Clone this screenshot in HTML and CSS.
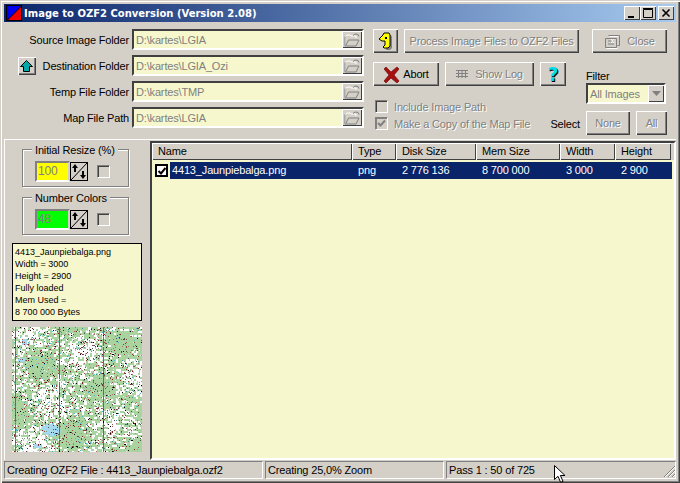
FILE: index.html
```html
<!DOCTYPE html>
<html lang="en">
<head>
    <meta charset="UTF-8">
    <title>Image to OZF2 Conversion</title>
    <link rel="stylesheet" href="styles.css">
</head>
<body>
    <svg class="defs" width="0" height="0">
        <symbol id="folder" viewBox="0 0 16 14">
            <path d="M1.5 12.5V3.5L3 2h3l1 1h5v2" fill="none" stroke="#fff" stroke-width="1"/>
            <path d="M1 3.5V13h11l3-6H4.5L2 12" fill="none" stroke="#808080" stroke-width="1"/>
            <path d="M9 2.5l2-1.5 3 .5 1 2" fill="none" stroke="#808080" stroke-width="1"/>
        </symbol>
    </svg>

    <div class="window">
        <div class="titlebar">
            <svg class="app-icon" width="16" height="16" viewBox="0 0 16 16">
                <rect width="16" height="16" fill="#000"/>
                <path d="M1 1h14L1 15z" fill="#0000f0"/>
                <path d="M15 2v13H2z" fill="#f00000"/>
            </svg>
            <span class="title">Image to OZF2 Conversion (Version 2.08)</span>
            <div class="win-buttons">
                <div class="win-btn"><svg width="16" height="14"><rect x="4" y="10" width="6" height="2" fill="#000"/></svg></div>
                <div class="win-btn"><svg width="16" height="14"><path d="M3.5 3.5h9v8h-9zM3 2.5h10" fill="none" stroke="#000"/></svg></div>
                <div class="win-btn win-close"><svg width="16" height="14"><path d="M4.5 3.5l7 7M11.5 3.5l-7 7" stroke="#000" stroke-width="1.6"/></svg></div>
            </div>
        </div>

        <div class="top">
            <div class="paths">
                <div class="path-row">
                    <label>Source Image Folder</label>
                    <div class="field">D:\kartes\LGIA<div class="browse"><svg width="16" height="14"><use href="#folder"/></svg></div></div>
                </div>
                <div class="path-row">
                    <div class="btn up-btn">
                        <svg width="13" height="12" viewBox="0 0 13 12"><path d="M6.5 .5l6 6H9.5v5h-6v-5H.5z" fill="#00a8a8" stroke="#000"/></svg>
                    </div>
                    <label>Destination Folder</label>
                    <div class="field">D:\kartes\LGIA_Ozi<div class="browse"><svg width="16" height="14"><use href="#folder"/></svg></div></div>
                </div>
                <div class="path-row">
                    <label>Temp File Folder</label>
                    <div class="field">D:\kartes\TMP<div class="browse"><svg width="16" height="14"><use href="#folder"/></svg></div></div>
                </div>
                <div class="path-row">
                    <label>Map File Path</label>
                    <div class="field">D:\kartes\LGIA<div class="browse"><svg width="16" height="14"><use href="#folder"/></svg></div></div>
                </div>
            </div>

            <div class="actions">
                <div class="btn-row">
                    <div class="btn key-btn">
                        <svg width="15" height="19" viewBox="0 0 15 19">
                            <path d="M10 3h3l1 2v11l-2 2H8z" fill="#808080"/>
                            <path d="M6 1h5l1 2v11l-2 2H6l-1-1 2-2V9H4L1 7l4-4z" fill="#ffff00" stroke="#000"/>
                            <path d="M7 5h2v2H7z" fill="#000"/>
                        </svg>
                    </div>
                    <div class="btn process-btn disabled">Process Image Files to OZF2 Files</div>
                </div>
                <div class="btn-row">
                    <div class="btn abort-btn">
                        <svg width="17" height="17" viewBox="0 0 17 17">
                            <path d="M1 3l2-2 5 5 6-5 2 2-5 6 5 6-2 2-6-5-5 5-2-2 5-6z" fill="#a81010" stroke="#701010" stroke-width=".7"/>
                        </svg>
                        Abort
                    </div>
                    <div class="btn log-btn disabled">
                        <svg width="12" height="8" viewBox="0 0 12 8"><path d="M0 .5h12M0 3.5h12M0 6.5h12M2.5 0v8M6 0v8M9.5 0v8" stroke="#808080"/></svg>
                        Show Log
                    </div>
                    <div class="btn help-btn">?</div>
                </div>
                <div class="check-line disabled-text">
                    <span class="check"></span>Include Image Path
                </div>
                <div class="check-line disabled-text">
                    <span class="check checked"><svg width="11" height="11"><path d="M2 5l2.5 2.5L9 2.5" fill="none" stroke="#808080" stroke-width="2"/></svg></span>Make a Copy of the Map File
                    <span class="select-label">Select</span>
                </div>
            </div>

            <div class="actions-right">
                <div class="btn close-btn disabled">
                    <svg width="17" height="15" viewBox="0 0 17 15">
                        <path d="M4.5 1.5h11v10h-2M1.5 4.5h11v9h-11zM4 7h6M4 10h6" fill="none" stroke="#808080"/>
                        <path d="M5.5 2.5h9M2.5 14.5h11M7 5l3 4M10 5L7 9" fill="none" stroke="#fff"/>
                    </svg>
                    Close
                </div>
                <div class="filter-label">Filter</div>
                <div class="combo">
                    <span>All Images</span>
                    <div class="combo-arrow"><svg width="9" height="5"><path d="M0 0h9L4.5 5z" fill="#808080"/></svg></div>
                </div>
                <div class="btn-row select-row">
                    <div class="btn none-btn disabled">None</div>
                    <div class="btn all-btn disabled">All</div>
                </div>
            </div>
        </div>

        <div class="main">
            <div class="side">
                <div class="group">
                    <span class="legend">Initial Resize (%)</span>
                    <div class="spin-field">
                        <div class="spin-value yellow">100</div>
                        <div class="spin"><svg width="16" height="17" viewBox="0 0 16 17"><path d="M16 0L0 17" stroke="#000"/><path d="M4 1L1 5h2v4h2V5h2zM12 16l3-4h-2V8h-2v4H9z" fill="#000"/></svg></div>
                        <span class="check"></span>
                    </div>
                </div>
                <div class="group">
                    <span class="legend">Number Colors</span>
                    <div class="spin-field">
                        <div class="spin-value green">48</div>
                        <div class="spin"><svg width="16" height="17" viewBox="0 0 16 17"><path d="M16 0L0 17" stroke="#000"/><path d="M4 1L1 5h2v4h2V5h2zM12 16l3-4h-2V8h-2v4H9z" fill="#000"/></svg></div>
                        <span class="check"></span>
                    </div>
                </div>
                <div class="info">
                    4413_Jaunpiebalga.png<br>
                    Width = 3000<br>
                    Height = 2900<br>
                    Fully loaded<br>
                    Mem Used =<br>
                    8 700 000 Bytes
                </div>
                <canvas class="preview" id="preview" width="130" height="125"></canvas>
            </div>

            <div class="list">
                <div class="list-head">
                    <div class="col col-name">Name</div>
                    <div class="col col-type">Type</div>
                    <div class="col col-disk">Disk Size</div>
                    <div class="col col-mem">Mem Size</div>
                    <div class="col col-width">Width</div>
                    <div class="col col-height">Height</div>
                </div>
                <div class="list-row">
                    <div class="cell col-name">
                        <span class="row-check"><svg width="10" height="10"><path d="M1.5 5l2.5 2.5L8.5 2" fill="none" stroke="#000" stroke-width="2"/></svg></span>
                        <span class="row-name">4413_Jaunpiebalga.png</span>
                    </div>
                    <div class="cell col-type">png</div>
                    <div class="cell col-disk">2 776 136</div>
                    <div class="cell col-mem">8 700 000</div>
                    <div class="cell col-width">3 000</div>
                    <div class="cell col-height">2 900</div>
                </div>
            </div>
        </div>

        <div class="status">
            <div class="pane pane-1">Creating OZF2 File : 4413_Jaunpiebalga.ozf2</div>
            <div class="pane pane-2">Creating 25,0% Zoom</div>
            <div class="pane pane-3">Pass 1 : 50 of 725</div>
            <svg class="grip" width="13" height="13"><path d="M12 1L1 12M12 5L5 12M12 9L9 12" stroke="#808080"/><path d="M12 2L2 12M12 6L6 12M12 10L10 12" stroke="#fff"/></svg>
        </div>

        <svg class="cursor" width="13" height="18" viewBox="0 0 13 18"><path d="M.5 .5v14l3.5-3.2 2.6 6 2.4-1-2.6-5.8H11z" fill="#fff" stroke="#000"/></svg>
    </div>

    <script src="script.js"></script>
</body>
</html>
```

FILE: styles.css
```css
* {
    box-sizing: border-box;
}

body {
    margin: 0;
    font-family: "Liberation Sans", Arial, sans-serif;
    font-size: 11px;
    letter-spacing: -0.16px;
    color: #000;
    background: #d4d0c8;
    overflow: hidden;
}

.defs {
    position: absolute;
}

.window {
    position: relative;
    width: 680px;
    height: 483px;
    padding: 4px;
    background: #d4d0c8;
    display: flex;
    flex-direction: column;
    box-shadow: inset 1px 1px 0 #d4d0c8, inset 2px 2px 0 #fff, inset -1px -1px 0 #404040, inset -2px -2px 0 #808080;
}

/* title bar */
.titlebar {
    height: 18px;
    flex: none;
    display: flex;
    align-items: center;
    padding: 0 2px;
    background: linear-gradient(to right, #0a246a, #a6caf0);
}

.app-icon {
    flex: none;
}

.title {
    margin-left: 2px;
    color: #fff;
    font-family: "DejaVu Sans", Verdana, sans-serif;
    font-size: 10px;
    font-weight: bold;
    letter-spacing: 0;
    white-space: nowrap;
}

.win-buttons {
    margin-left: auto;
    display: flex;
}

.win-btn {
    width: 16px;
    height: 14px;
    background: #d4d0c8;
    box-shadow: inset 1px 1px 0 #fff, inset -1px -1px 0 #404040;
}

.win-close {
    margin-left: 2px;
}

.win-btn svg {
    display: block;
}

/* top panel */
.top {
    height: 118px;
    flex: none;
    display: flex;
    border-bottom: 1px solid #fff;
}

.paths {
    width: 360px;
    padding-top: 7px;
    display: flex;
    flex-direction: column;
    gap: 5px;
}

.path-row {
    height: 21px;
    display: flex;
    align-items: center;
    justify-content: flex-end;
}

.path-row label {
    margin-right: 3px;
    white-space: nowrap;
}

.up-btn {
    width: 18px;
    height: 18px;
    margin-right: 7px;
}

.field {
    position: relative;
    width: 232px;
    height: 21px;
    padding: 2px 0 0 2px;
    color: #808080;
    background: #f7f7cd;
    border: 2px solid;
    border-color: #404040 #fff #fff #404040;
    line-height: 14px;
    white-space: nowrap;
}

.browse {
    position: absolute;
    top: 0;
    right: 0;
    width: 20px;
    height: 17px;
    background: #d4d0c8;
    display: flex;
    align-items: center;
    justify-content: center;
    box-shadow: inset 1px 1px 0 #fff, inset -1px -1px 0 #404040;
}

.btn {
    display: flex;
    align-items: center;
    justify-content: center;
    flex: none;
    background: #d4d0c8;
    box-shadow: inset 1px 1px 0 #fff, inset -1px -1px 0 #404040, inset -2px -2px 0 #808080;
    white-space: nowrap;
}

.disabled,
.disabled-text {
    color: #808080;
    text-shadow: 1px 1px 0 #fff;
}

.actions {
    width: 213px;
    margin-left: 9px;
    padding-top: 7px;
    flex: none;
}

.btn-row {
    display: flex;
    gap: 6px;
    margin-bottom: 9px;
}

.btn-row .btn {
    height: 24px;
}

.key-btn {
    width: 25px;
}

.process-btn {
    width: 175px;
}

.abort-btn {
    width: 66px;
    gap: 3px;
}

.log-btn {
    width: 89px;
    gap: 7px;
}

.help-btn {
    width: 26px;
    color: #00dce8;
    font-family: "DejaVu Sans", sans-serif;
    font-size: 19px;
    font-weight: bold;
    text-shadow: 1px 1px 0 #000;
}

.check-line {
    height: 17px;
    margin-left: 2px;
    display: flex;
    align-items: center;
    white-space: nowrap;
}

.btn-row + .check-line {
    margin-top: 12px;
}

.check {
    width: 13px;
    height: 13px;
    flex: none;
    margin-right: 6px;
    border: 1px solid;
    border-color: #808080 #fff #fff #808080;
    box-shadow: inset 1px 1px 0 #404040;
}

.check svg {
    display: block;
}

.checked {
    box-shadow: inset 1px 1px 0 #808080;
}

.select-label {
    margin-left: auto;
    margin-right: 6px;
    color: #000;
    text-shadow: none;
}

.actions-right {
    width: 81px;
    padding-top: 7px;
    flex: none;
}

.close-btn {
    width: 75px;
    height: 24px;
    margin-left: 6px;
    gap: 6px;
}

.filter-label {
    margin-top: 16px;
    line-height: 14px;
}

.combo {
    width: 80px;
    height: 21px;
    padding-left: 2px;
    display: flex;
    align-items: center;
    justify-content: space-between;
    color: #808080;
    background: #f7f7cd;
    border: 2px solid;
    border-color: #404040 #fff #fff #404040;
}

.combo-arrow {
    width: 16px;
    height: 17px;
    background: #d4d0c8;
    display: flex;
    align-items: center;
    justify-content: center;
    box-shadow: inset 1px 1px 0 #fff, inset -1px -1px 0 #404040;
}

.select-row {
    margin-top: 7px;
}

.none-btn {
    width: 44px;
}

.all-btn {
    width: 31px;
}

/* lower part */
.main {
    flex: 1;
    display: flex;
    min-height: 0;
}

.side {
    width: 146px;
    flex: none;
    padding: 9px 0 0 7px;
    border-left: 1px solid #fff;
}

.group {
    position: relative;
    width: 107px;
    height: 38px;
    margin: 0 0 10px 10px;
    border: 1px solid #808080;
    box-shadow: 1px 1px 0 #fff, inset 1px 1px 0 #fff;
}

.legend {
    position: absolute;
    top: -7px;
    left: 9px;
    padding: 0 3px;
    background: #d4d0c8;
    line-height: 14px;
    white-space: nowrap;
}

.spin-field {
    position: absolute;
    top: 11px;
    left: 12px;
    display: flex;
    align-items: center;
}

.spin-value {
    width: 35px;
    height: 21px;
    padding-left: 1px;
    color: #808080;
    border: 2px solid;
    border-color: #808080 #d4d0c8 #fff #808080;
    line-height: 17px;
    font-size: 12px;
}

.yellow {
    background: #ffff00;
}

.green {
    background: #00ff00;
}

.spin {
    width: 18px;
    height: 19px;
    margin-right: 9px;
    background: #d4d0c8;
    border: 1px solid #000;
}

.spin svg {
    display: block;
}

.info {
    width: 130px;
    height: 78px;
    margin-top: -2px;
    padding: 2px;
    background: #f7f7cd;
    border: 1px solid #000;
    font-size: 9px;
    letter-spacing: 0;
    line-height: 12px;
    white-space: nowrap;
}

.preview {
    display: block;
    width: 130px;
    height: 125px;
    margin-top: 6px;
}

.list {
    flex: 1;
    min-width: 0;
    margin-top: 1px;
    background: #f7f7cd;
    border: 2px solid;
    border-color: #404040 #fff #fff #404040;
}

.list-head {
    height: 17px;
    display: flex;
    background: #d4d0c8;
}

.col {
    height: 17px;
    padding-left: 6px;
    line-height: 16px;
    white-space: nowrap;
    box-shadow: inset 1px 1px 0 #fff, inset -1px -1px 0 #404040;
}

.list-row {
    height: 17px;
    margin: 2px 2px 0 0;
    display: flex;
    color: #fff;
    background: #0a246a;
}

.cell {
    padding-left: 6px;
    line-height: 17px;
    white-space: nowrap;
}

.col-name {
    width: 200px;
    flex: none;
}

.col-type {
    width: 44px;
    flex: none;
}

.col-disk {
    width: 80px;
    flex: none;
}

.col-mem {
    width: 84px;
    flex: none;
}

.col-width {
    width: 55px;
    flex: none;
}

.col-height {
    width: 56px;
    flex: none;
}

.cell.col-name {
    padding-left: 0;
    display: flex;
    background: #f7f7cd;
}

.row-check {
    width: 13px;
    height: 13px;
    margin: 2px 2px 0 3px;
    background: #fff;
    border: 2px solid #000;
    flex: none;
}

.row-check svg {
    display: block;
    width: 9px;
    height: 9px;
}

.row-name {
    flex: 1;
    padding-left: 2px;
    background: #0a246a;
}

/* status bar */
.status {
    height: 19px;
    flex: none;
    display: flex;
    gap: 2px;
    padding-top: 1px;
    position: relative;
}

.pane {
    height: 18px;
    padding-left: 2px;
    line-height: 16px;
    white-space: nowrap;
    border: 1px solid;
    border-color: #808080 #fff #fff #808080;
}

.pane-1 {
    width: 259px;
}

.pane-2 {
    width: 179px;
}

.pane-3 {
    flex: 1;
}

.grip {
    position: absolute;
    right: 0;
    bottom: 1px;
}

.cursor {
    position: absolute;
    left: 554px;
    top: 465px;
}
```

FILE: script.js
```js
// map preview is just seeded noise, drawn once
const canvas = document.getElementById('preview');
const ctx = canvas.getContext('2d');

let seed = 4413;
function rnd() {
    seed = (seed * 16807) % 2147483647;
    return seed / 2147483647;
}

const W = canvas.width;
const H = canvas.height;

ctx.fillStyle = '#a9d4a0';
ctx.fillRect(0, 0, W, H);

// white clearings, thicker where the wave is high
const cell = 2;
for (let y = 0; y < H; y += cell) {
    for (let x = 0; x < W; x += cell) {
        const wave = Math.sin(x / 11 + y / 19) + Math.cos(y / 9 - x / 23);
        if (rnd() + wave * 0.2 > 0.7) {
            ctx.fillStyle = '#ffffff';
            ctx.fillRect(x, y, cell + Math.floor(rnd() * 2), cell);
        }
    }
}

// lake and small waters
ctx.fillStyle = '#a6d8ee';
ctx.beginPath();
ctx.ellipse(39, 103, 10, 6, 0.2, 0, Math.PI * 2);
ctx.fill();
ctx.fillRect(22, 117, 8, 4);
ctx.fillRect(6, 31, 7, 4);
ctx.fillRect(10, 12, 5, 6);

// sheet lines
ctx.fillStyle = '#5f6f60';
[3, 47, 91].forEach((x) => ctx.fillRect(x, 0, 1, H));

// speckle, mostly mid tones so it stays soft
const dots = ['#000000', '#7a2020', '#9a5050', '#50b8d0', '#505050', '#b07070', '#409090', '#8a4040', '#e8f4e8', '#70a070'];
for (let i = 0; i < 2000; i++) {
    ctx.fillStyle = dots[Math.floor(rnd() * dots.length)];
    ctx.fillRect(Math.floor(rnd() * W), Math.floor(rnd() * H), 1, 1);
}
```
